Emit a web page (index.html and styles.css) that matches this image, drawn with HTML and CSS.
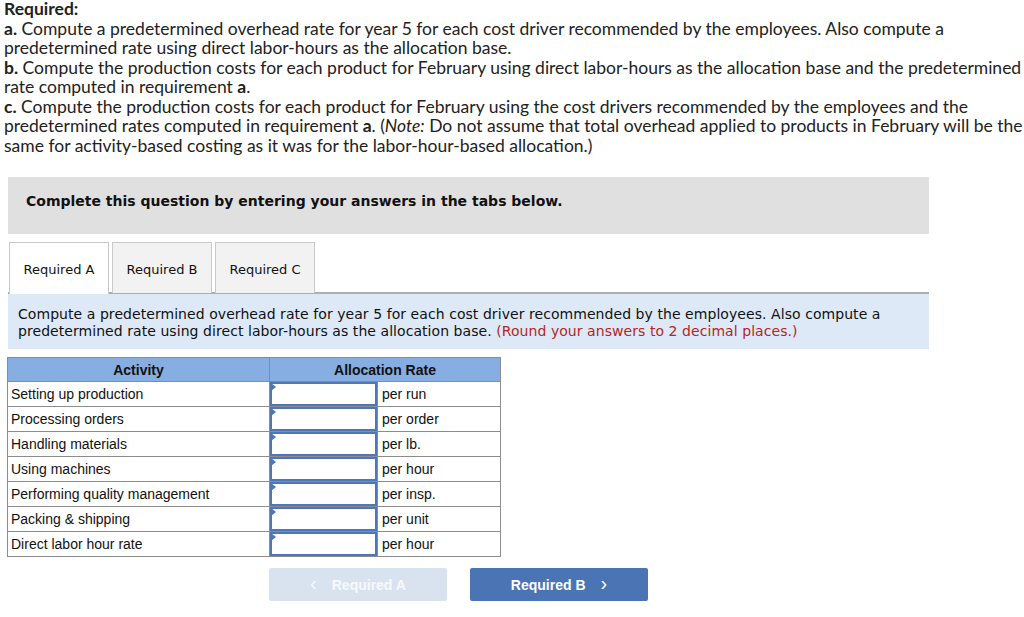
FILE: index.html
```html
<!DOCTYPE html>
<html>
<head>
<meta charset="utf-8">
<link rel="stylesheet" href="styles.css">
</head>
<body>
<div class="required">
  <div class="req-title">Required:</div>
  <p><b>a.</b> Compute a predetermined overhead rate for year 5 for each cost driver recommended by the employees. Also compute a predetermined rate using direct labor-hours as the allocation base.</p>
  <p><b>b.</b> Compute the production costs for each product for February using direct labor-hours as the allocation base and the predetermined rate computed in requirement <b>a</b>.</p>
  <p><b>c.</b> Compute the production costs for each product for February using the cost drivers recommended by the employees and the predetermined rates computed in requirement <b>a</b>. (<i>Note:</i> Do not assume that total overhead applied to products in February will be the same for activity-based costing as it was for the labor-hour-based allocation.)</p>
</div>

<div class="panel">
  <div class="banner">Complete this question by entering your answers in the tabs below.</div>

  <div class="tabs">
    <div class="tab active">Required A</div>
    <div class="tab">Required B</div>
    <div class="tab">Required C</div>
  </div>

  <div class="instructions">Compute a predetermined overhead rate for year 5 for each cost driver recommended by the employees. Also compute a predetermined rate using direct labor-hours as the allocation base. <span class="red">(Round your answers to 2 decimal places.)</span></div>
</div>

<table class="rates">
  <colgroup>
    <col class="w1">
    <col class="w2">
    <col class="w3">
  </colgroup>
  <thead>
    <tr><th>Activity</th><th colspan="2">Allocation Rate</th></tr>
  </thead>
  <tbody>
    <tr><td class="c1">Setting up production</td><td class="inp"><div class="box"></div></td><td class="unit">per run</td></tr>
    <tr><td class="c1">Processing orders</td><td class="inp"><div class="box"></div></td><td class="unit">per order</td></tr>
    <tr><td class="c1">Handling materials</td><td class="inp"><div class="box"></div></td><td class="unit">per lb.</td></tr>
    <tr><td class="c1">Using machines</td><td class="inp"><div class="box"></div></td><td class="unit">per hour</td></tr>
    <tr><td class="c1">Performing quality management</td><td class="inp"><div class="box"></div></td><td class="unit">per insp.</td></tr>
    <tr><td class="c1">Packing &amp; shipping</td><td class="inp"><div class="box"></div></td><td class="unit">per unit</td></tr>
    <tr><td class="c1">Direct labor hour rate</td><td class="inp"><div class="box"></div></td><td class="unit">per hour</td></tr>
  </tbody>
</table>

<div class="nav">
  <div class="btn disabled"><span class="chev">&lsaquo;</span> Required A</div>
  <div class="btn primary">Required B <span class="chev">&rsaquo;</span></div>
</div>
</body>
</html>
```

FILE: styles.css
```css
html, body {
  margin: 0;
  padding: 0;
  background: #fff;
}
body {
  width: 1024px;
  height: 617px;
  overflow: hidden;
  color: #1a1a1a;
}
.required {
  font-family: "Lato", "Liberation Sans", sans-serif;
  font-size: 17.5px;
  line-height: 19.5px;
  padding: 0 0 0 4px;
  margin-top: -1px;
  color: #222;
}
.required p { margin: 0; }
.req-title { font-weight: bold; }
.required b { font-weight: bold; }

.panel {
  margin-left: 8px;
  width: 921px;
  margin-top: 22px;
}
.banner {
  background: #e0e0e0;
  height: 57px;
  box-sizing: border-box;
  padding: 16px 18px 0;
  font-family: "DejaVu Sans", Verdana, sans-serif;
  font-weight: bold;
  font-size: 14px;
  color: #111;
}
.tabs {
  display: flex;
  gap: 3px;
  margin-top: 8px;
  padding-left: 1px;
  border-bottom: 2px solid #adadad;
  height: 50px;
}
.tab {
  width: 100px;
  box-sizing: border-box;
  height: 51px;
  border: 1px solid #c9c9c9;
  border-bottom: none;
  background: #f2f2f2;
  font-family: "DejaVu Sans", Verdana, sans-serif;
  font-size: 13px;
  color: #111;
  display: flex;
  align-items: center;
  justify-content: center;
  padding-top: 2px;
}
.tab.active {
  background: #fff;
  height: 52px;
  position: relative;
  z-index: 1;
}
.instructions {
  background: #dde9f7;
  padding: 12px 10px 10px;
  font-family: "DejaVu Sans", Verdana, sans-serif;
  font-size: 14px;
  letter-spacing: 0.06px;
  line-height: 17px;
  color: #111;
  height: 55px;
  box-sizing: border-box;
}
.red { color: #b3261e; }

.rates {
  border-collapse: collapse;
  margin-left: 7px;
  margin-top: 8px;
  font-family: "Liberation Sans", Arial, sans-serif;
  font-size: 14px;
  color: #111;
  table-layout: fixed;
  width: 493px;
}
.rates col.w1 { width: 262px; }
.rates col.w2 { width: 108px; }
.rates col.w3 { width: 123px; }
.rates th, .rates td {
  border: 1px solid #8c8c8c;
  padding: 0;
}
.rates th {
  background: #86aee2;
  height: 23px;
  font-weight: bold;
  text-align: center;
}
.rates td {
  height: 24px;
}
.rates td.c1 { padding-left: 3px; }
.rates td.inp { position: relative; }
.rates td.unit { padding-left: 4px; }
.box {
  position: relative;
  height: 24px;
  box-sizing: border-box;
  border: 2px solid #4d77b6;
  margin: 0;
}
.box::before {
  content: "";
  position: absolute;
  left: -1px;
  top: -1px;
  width: 0;
  height: 0;
  border-top: 4px solid transparent;
  border-bottom: 4px solid transparent;
  border-left: 5px solid #4d77b6;
}

.nav {
  display: flex;
  gap: 23px;
  margin-left: 269px;
  margin-top: 11px;
}
.btn {
  width: 178px;
  height: 33px;
  border-radius: 2px;
  display: flex;
  align-items: center;
  justify-content: center;
  font-family: "Liberation Sans", Arial, sans-serif;
  font-weight: bold;
  font-size: 14px;
  color: #fff;
  gap: 15px;
}
.btn .chev { font-size: 20px; font-weight: normal; line-height: 1; margin-top: -3px; }
.btn.disabled { background: #d9e3ef; color: #f7f9fc; }
.btn.primary { background: #4a74b4; }
```
